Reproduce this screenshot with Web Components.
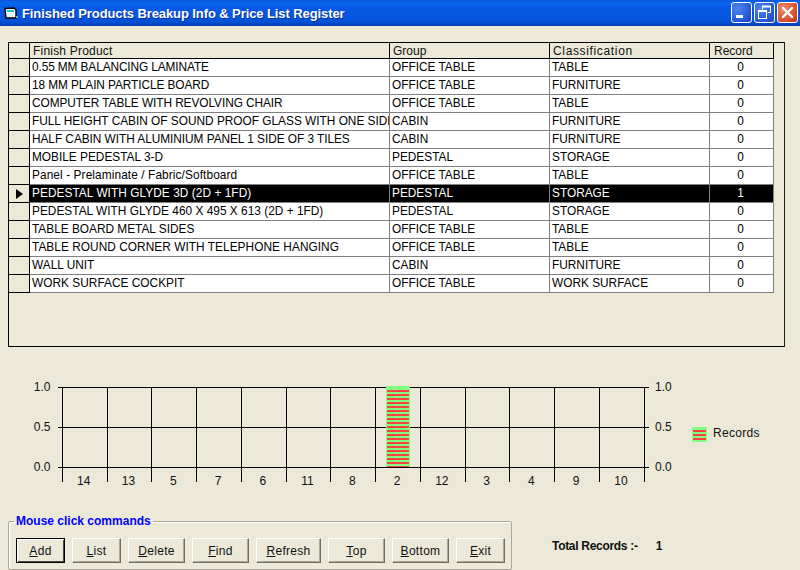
<!DOCTYPE html>
<html>
<head>
<meta charset="utf-8">
<title>Finished Products Breakup Info</title>
<style>
    html, body { margin: 0; padding: 0; height: 570px; overflow: hidden; background: #ece9d8; }
    body { display: flex; flex-direction: column; font-family: "Liberation Sans", Arial, sans-serif; font-size: 12px; color: #000; }
</style>
</head>
<body>
<xp-titlebar>Finished Products Breakup Info &amp; Price List Register</xp-titlebar>
<product-grid></product-grid>
<records-chart></records-chart>
<div id="bottom" style="display:flex;align-items:flex-start;padding-left:8px">
    <command-group label="Mouse click commands">
        <xp-button default key="A" rest="dd" width="49">Add</xp-button>
        <xp-button key="L" rest="ist" width="49">List</xp-button>
        <xp-button key="D" rest="elete" width="57">Delete</xp-button>
        <xp-button key="F" rest="ind" width="57">Find</xp-button>
        <xp-button key="R" rest="efresh" width="65">Refresh</xp-button>
        <xp-button key="T" rest="op" width="57">Top</xp-button>
        <xp-button key="B" rest="ottom" width="57">Bottom</xp-button>
        <xp-button key="E" rest="xit" width="49">Exit</xp-button>
    </command-group>
    <total-records count="1"></total-records>
</div>

<script>
class XpTitlebar extends HTMLElement {
    connectedCallback() {
        this.attachShadow({ mode: 'open' });
        this.shadowRoot.innerHTML = `
            <style>
                :host {
                    display: flex;
                    align-items: center;
                    flex: none;
                    height: 26px;
                    padding: 0 2px 0 4px;
                    box-sizing: border-box;
                    background: linear-gradient(180deg, #0a58d8 0, #0a66ee 3px, #0659e4 8px, #0556e0 18px, #0550d4 22px, #0340b0 26px);
                }
                .icon { flex: none; width: 14px; height: 13px; margin-right: 4px; }
                .title {
                    flex: 1;
                    color: #fff;
                    font: bold 13px "Liberation Sans", Arial, sans-serif;
                    letter-spacing: -0.09px;
                    text-shadow: 1px 1px 0 #0a2f90;
                    white-space: nowrap;
                }
                .btn {
                    flex: none;
                    width: 21px;
                    height: 21px;
                    box-sizing: border-box;
                    margin-left: 2px;
                    margin-top: -1px;
                    border: 1px solid #fff;
                    border-radius: 3px;
                    background: radial-gradient(circle at 30% 30%, #4f86f0, #2456d8 70%, #1c46c0);
                }
                .btn.close { background: radial-gradient(circle at 30% 30%, #ec8a6e, #d8502c 65%, #b83410); }
                svg.g { display: block; width: 19px; height: 19px; }
            </style>
            <svg class="icon" viewBox="0 0 14 13">
                <path d="M1 1.5 10 1 12 3v8H2z" fill="#fff" stroke="#000" stroke-width="1.4"/>
                <rect x="3" y="3" width="7" height="2" fill="#18c8d8"/>
                <path d="M3 6h7v4H3z" fill="#e8f4f4"/>
                <rect x="12" y="9" width="2" height="2" fill="#7f9fc0"/>
            </svg>
            <div class="title"><slot></slot></div>
            <div class="btn"><svg class="g" viewBox="0 0 19 19"><rect x="4" y="12" width="7" height="3" fill="#fff"/></svg></div>
            <div class="btn"><svg class="g" viewBox="0 0 19 19" fill="none" stroke="#fff"><path d="M7.5 6.5V3.5h8v6h-3" stroke-width="1"/><path d="M7 3.5h9" stroke-width="2"/><rect x="3.5" y="7.5" width="8" height="8" stroke-width="1"/><path d="M3 8h9" stroke-width="2"/></svg></div>
            <div class="btn close"><svg class="g" viewBox="0 0 19 19" stroke="#fff" stroke-width="2.4" stroke-linecap="round"><path d="M5 5l9 9M14 5l-9 9"/></svg></div>
        `;
    }
}

// name, group, classification, records, letter spacing of the name
const PRODUCTS = [
    ['0.55 MM BALANCING LAMINATE', 'OFFICE TABLE', 'TABLE', 0, -.1],
    ['18 MM PLAIN PARTICLE BOARD', 'OFFICE TABLE', 'FURNITURE', 0, -.08],
    ['COMPUTER TABLE WITH REVOLVING CHAIR', 'OFFICE TABLE', 'TABLE', 0, -.06],
    ['FULL HEIGHT CABIN OF SOUND PROOF GLASS WITH ONE SIDE', 'CABIN', 'FURNITURE', 0, 0],
    ['HALF CABIN WITH ALUMINIUM PANEL 1 SIDE OF 3 TILES', 'CABIN', 'FURNITURE', 0, -.04],
    ['MOBILE PEDESTAL 3-D', 'PEDESTAL', 'STORAGE', 0, 0],
    ['Panel - Prelaminate / Fabric/Softboard', 'OFFICE TABLE', 'TABLE', 0, .1],
    ['PEDESTAL WITH GLYDE 3D (2D + 1FD)', 'PEDESTAL', 'STORAGE', 1, .06],
    ['PEDESTAL WITH GLYDE 460 X 495 X 613 (2D + 1FD)', 'PEDESTAL', 'STORAGE', 0, .02],
    ['TABLE BOARD METAL SIDES', 'OFFICE TABLE', 'TABLE', 0, 0],
    ['TABLE ROUND CORNER WITH TELEPHONE HANGING', 'OFFICE TABLE', 'TABLE', 0, .05],
    ['WALL UNIT', 'CABIN', 'FURNITURE', 0, 0],
    ['WORK SURFACE COCKPIT', 'OFFICE TABLE', 'WORK SURFACE', 0, .03]
];

class ProductGrid extends HTMLElement {
    connectedCallback() {
        this.attachShadow({ mode: 'open' });
        const rows = PRODUCTS.map((p, i) => `
            <div class="row ${i === 7 ? 'sel' : ''}">
                <div class="ind">${i === 7 ? '<span class="arrow"></span>' : ''}</div>
                <div class="cell" style="letter-spacing:${p[4]}px">${p[0]}</div>
                <div class="cell">${p[1]}</div>
                <div class="cell">${p[2]}</div>
                <div class="cell num">${p[3]}</div>
            </div>`).join('');
        this.shadowRoot.innerHTML = `
            <style>
                :host {
                    display: block;
                    flex: none;
                    box-sizing: border-box;
                    width: 777px;
                    height: 305px;
                    margin: 16px 0 0 8px;
                    border: 1px solid #000;
                    border-right-color: #222;
                    font: 11.85px "Liberation Sans", Arial, sans-serif;
                }
                .row {
                    display: grid;
                    grid-template-columns: 21px 360px 160px 160px 64px;
                    width: 765px;
                    height: 18px;
                    box-sizing: border-box;
                }
                .head { height: 16px; }
                .ind, .cell, .hcell { box-sizing: border-box; overflow: hidden; white-space: nowrap; }
                .ind {
                    background: #ece9d8;
                    border-right: 1px solid #000;
                    border-bottom: 1px solid #000;
                    display: flex;
                    align-items: center;
                    justify-content: center;
                }
                .hcell {
                    background: #ece9d8;
                    border-right: 1px solid #000;
                    border-bottom: 1px solid #000;
                    padding-left: 3px;
                    line-height: 16px;
                    color: #111;
                    font-size: 12px;
                }
                .hcell.a { letter-spacing: .2px; }
                .hcell.b { letter-spacing: .65px; }
                .hcell.c { padding-left: 4px; }
                .cell {
                    background: #fff;
                    border-right: 1px solid #808080;
                    border-bottom: 1px solid #808080;
                    padding-left: 2px;
                    line-height: 16px;
                }
                .num { text-align: center; padding: 0 2px 0 0; }
                .sel .cell { background: #000; color: #fff; }
                .arrow {
                    width: 0; height: 0;
                    border-left: 7px solid #000;
                    border-top: 5px solid transparent;
                    border-bottom: 5px solid transparent;
                }
            </style>
            <div class="row head">
                <div class="ind"></div>
                <div class="hcell a">Finish Product</div>
                <div class="hcell">Group</div>
                <div class="hcell b">Classification</div>
                <div class="hcell c">Record</div>
            </div>
            ${rows}
        `;
    }
}

class RecordsChart extends HTMLElement {
    connectedCallback() {
        this.attachShadow({ mode: 'open' });
        const cats = [14, 13, 5, 7, 6, 11, 8, 2, 12, 3, 4, 9, 10];
        const left = 62, right = 644, step = (right - left) / cats.length;
        let lines = '', labels = '';
        [[40.5, '1.0'], [80.5, '0.5'], [120.5, '0.0']].forEach(([y, t]) => {
            lines += `<path d="M58 ${y}H649"/>`;
            labels += `<text x="50.5" y="${y + 3.5}" text-anchor="end">${t}</text><text x="655" y="${y + 3.5}">${t}</text>`;
        });
        for (let i = 0; i <= cats.length; i++) {
            const x = Math.floor(left + step * i + .3) + .5;
            lines += `<path d="M${x} 40V134.5"/>`;
            if (i < cats.length) labels += `<text x="${left + step * (i + .5) - .7}" y="138" text-anchor="middle">${cats[i]}</text>`;
        }
        this.shadowRoot.innerHTML = `
            <style>
                :host { display: block; flex: none; height: 167px; }
                svg { display: block; }
                text { font: 12px "Liberation Sans", Arial, sans-serif; fill: #111; }
                .legend { letter-spacing: .3px; }
                .axes { stroke: #000; stroke-width: 1; fill: none; shape-rendering: crispEdges; }
            </style>
            <svg width="800" height="167" viewBox="0 0 800 167">
                <defs>
                    <pattern id="stripe" width="4" height="4" patternUnits="userSpaceOnUse" y="3">
                        <rect width="4" height="4" fill="#80ff80"/>
                        <rect y="0" width="4" height="2" fill="#ff4040"/>
                    </pattern>
                </defs>
                <g class="axes">${lines}</g>
                <rect x="386" y="39" width="24" height="81" fill="#80ff80"/>
                <rect x="387" y="43" width="22" height="77" fill="url(#stripe)"/>
                <rect x="692" y="80" width="15" height="15" fill="#80ff80"/>
                <rect x="693" y="83" width="13" height="2" fill="#ff4040"/>
                <rect x="693" y="87" width="13" height="2" fill="#ff4040"/>
                <rect x="693" y="91" width="13" height="2" fill="#ff4040"/>
                ${labels}
                <text class="legend" x="713" y="90">Records</text>
            </svg>
        `;
    }
}

class CommandGroup extends HTMLElement {
    connectedCallback() {
        this.attachShadow({ mode: 'open' });
        this.shadowRoot.innerHTML = `
            <style>
                :host { display: block; flex: none; width: 504px; font: 12px "Liberation Sans", Arial, sans-serif; }
                fieldset {
                    margin: 0;
                    box-sizing: border-box;
                    height: 56px;
                    padding: 10px 0 0 7px;
                    border: 1px solid #aca899;
                    border-radius: 2px;
                    box-shadow: inset 1px 1px 0 #fff;
                }
                legend {
                    padding: 0 2px;
                    margin-left: -2px;
                    color: #0000ff;
                    font-weight: bold;
                    line-height: 14px;
                }
                .btns { display: flex; gap: 7px; }
            </style>
            <fieldset>
                <legend>${this.getAttribute('label')}</legend>
                <div class="btns"><slot></slot></div>
            </fieldset>
        `;
    }
}

class XpButton extends HTMLElement {
    connectedCallback() {
        this.attachShadow({ mode: 'open' });
        const k = this.getAttribute('key'), r = this.getAttribute('rest');
        this.textContent = '';
        this.shadowRoot.innerHTML = `
            <style>
                :host {
                    display: flex;
                    align-items: center;
                    justify-content: center;
                    flex: none;
                    box-sizing: border-box;
                    width: ${this.getAttribute('width')}px;
                    height: 25px;
                    background: #ece9d8;
                    color: #111;
                    letter-spacing: .3px;
                    border: 1px solid;
                    border-color: #fff #716f64 #716f64 #fff;
                    box-shadow: inset -1px -1px 0 #aca899;
                }
                :host([default]) {
                    border-color: #000;
                    box-shadow: inset 1px 1px 0 #fff, inset -1px -1px 0 #4a4942;
                }
                u { text-decoration: underline; }
            </style>
            <span><u>${k}</u>${r}</span>
        `;
    }
}

class TotalRecords extends HTMLElement {
    connectedCallback() {
        this.attachShadow({ mode: 'open' });
        this.shadowRoot.innerHTML = `
            <style>
                :host {
                    display: flex;
                    flex: none;
                    margin: 25px 0 0 40px;
                    font: bold 12px "Liberation Sans", Arial, sans-serif;
                    color: #111;
                    line-height: 14px;
                }
                .t { letter-spacing: -.3px; }
                .n { margin-left: 18px; }
            </style>
            <span class="t">Total Records :-</span><span class="n">${this.getAttribute('count')}</span>
        `;
    }
}

customElements.define('xp-titlebar', XpTitlebar);
customElements.define('product-grid', ProductGrid);
customElements.define('records-chart', RecordsChart);
customElements.define('command-group', CommandGroup);
customElements.define('xp-button', XpButton);
customElements.define('total-records', TotalRecords);
</script>
</body>
</html>
